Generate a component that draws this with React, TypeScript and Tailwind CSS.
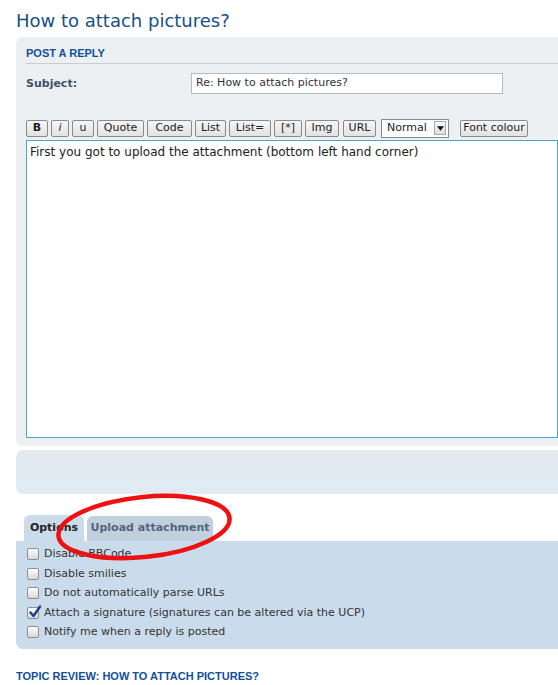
import React from 'react';

// width + left margin for each toolbar button, measured off the original
const TOOLBAR = [
    { label: 'B', cls: 'w-[22px] font-bold' },
    { label: 'i', cls: 'w-[18px] ml-[3px] italic' },
    { label: 'u', cls: 'w-[22px] ml-[3px]' },
    { label: 'Quote', cls: 'w-[47px] ml-[3px]' },
    { label: 'Code', cls: 'w-[45px] ml-[3px]' },
    { label: 'List', cls: 'w-[31px] ml-[3px]' },
    { label: 'List=', cls: 'w-[42px] ml-[3px]' },
    { label: '[*]', cls: 'w-[28px] ml-[3px]' },
    { label: 'Img', cls: 'w-[34px] ml-[3px]' },
    { label: 'URL', cls: 'w-[33px] ml-[4px]' },
];

const OPTIONS = [
    { label: 'Disable BBCode', checked: false },
    { label: 'Disable smilies', checked: false },
    { label: 'Do not automatically parse URLs', checked: false },
    { label: 'Attach a signature (signatures can be altered via the UCP)', checked: true },
    { label: 'Notify me when a reply is posted', checked: false },
];

function ToolButton({ label, cls }: { label: string; cls: string }) {
    return (
        <span className={`h-[17px] flex items-center justify-center border border-[#8a8a8a] bg-gradient-to-b from-[#f6f6f6] to-[#e2e2e2] text-[11px] text-[#222] rounded-[2px] ${cls}`}>
            {label}
        </span>
    );
}

function Checkbox({ checked }: { checked: boolean }) {
    return (
        <span className="relative w-[12px] h-[12px] shrink-0 rounded-[2px] border border-[#8e8e8e] bg-gradient-to-b from-[#ffffff] to-[#d8d8d8]">
            {checked && (
                <svg viewBox="0 0 14 14" className="absolute left-[0px] top-[-3px] w-[14px] h-[14px]">
                    <path d="M2.5 7.5 L5.5 11 L12 1.5" fill="none" stroke="#1b3f8f" strokeWidth="2.4" strokeLinecap="round" strokeLinejoin="round" />
                </svg>
            )}
        </span>
    );
}

export default function App() {
    return (
        <div className="relative w-[558px] h-[685px] overflow-hidden bg-white text-[#333]" style={{ fontFamily: '"DejaVu Sans", Verdana, sans-serif' }}>
            <h2 className="pl-[16px] pt-[8px] h-[37px] text-[18px] leading-[25px] text-[#174f86]">How to attach pictures?</h2>

            {/* post form panel */}
            <div className="ml-[16px] mr-[-20px] rounded-[7px] bg-[#ecf0f3] pl-[10px] pr-[20px] pt-[10px] pb-[8px]">
                <h3 className="text-[11px] font-bold leading-[12px] text-[#115098] pb-[4px] border-b border-[#cccccc]" style={{ fontFamily: '"Liberation Sans", Arial, sans-serif' }}>
                    POST A REPLY
                </h3>
                <div className="flex items-start mt-[9px] h-[21px]">
                    <span className="w-[165px] pt-[3px] text-[11px] font-bold text-[#425067]">Subject:</span>
                    <span className="w-[312px] h-[21px] flex items-center px-[4px] border border-[#b4bac0] bg-white text-[11px] text-[#333]">
                        Re: How to attach pictures?
                    </span>
                </div>
                <div className="flex items-center mt-[25px] h-[18px]">
                    {TOOLBAR.map((t) => (
                        <ToolButton key={t.label} label={t.label} cls={t.cls} />
                    ))}
                    <span className="ml-[5px] h-[19px] w-[68px] flex items-center justify-between pl-[5px] pr-[2px] border border-[#8a8a8a] bg-white text-[11px] text-[#222]">
                        Normal
                        <span className="w-[12px] h-[14px] flex items-center justify-center border border-[#aaa] bg-gradient-to-b from-[#fafafa] to-[#dcdcdc]">
                            <svg viewBox="0 0 8 5" className="w-[7px] h-[5px]">
                                <path d="M0 0 H8 L4 5 Z" fill="#111" />
                            </svg>
                        </span>
                    </span>
                    <ToolButton label="Font colour" cls="w-[68px] ml-[11px]" />
                </div>
                <div className="mt-[3px] h-[298px] border border-[#46a8c8] bg-white px-[3px] pt-[4px] text-[12px] leading-[15px] text-[#222]">
                    First you got to upload the attachment (bottom left hand corner)
                </div>
            </div>

            {/* empty panel */}
            <div className="ml-[16px] mr-[-20px] mt-[4px] h-[44px] rounded-[7px] bg-gradient-to-b from-[#e2e9ef] to-[#e0ebf4]" />

            {/* tabs */}
            <div className="flex items-end ml-[24px] mt-[21px] h-[26px] gap-[3px]">
                <span className="h-[26px] w-[60px] flex items-center justify-center rounded-t-[6px] bg-[#cadceb] text-[11px] font-bold text-[#222]">
                    Options
                </span>
                <span className="h-[25px] w-[126px] flex items-center justify-center rounded-t-[6px] bg-[#c2cfdc] text-[11px] font-bold text-[#536482]">
                    Upload attachment
                </span>
            </div>
            <div className="ml-[16px] mr-[-20px] h-[108px] rounded-b-[7px] rounded-tr-[7px] bg-[#cadceb] pl-[11px] pt-[6px] flex flex-col gap-[5px]">
                {OPTIONS.map((o) => (
                    <label key={o.label} className="flex items-center gap-[5px] h-[14.5px] text-[11px] text-[#333]">
                        <Checkbox checked={o.checked} />
                        {o.label}
                    </label>
                ))}
            </div>

            <h3 className="ml-[16px] mt-[21px] pb-[3px] border-b border-[#cccccc] text-[11px] font-bold leading-[12px] text-[#115098]" style={{ fontFamily: '"Liberation Sans", Arial, sans-serif' }}>
                TOPIC REVIEW: HOW TO ATTACH PICTURES?
            </h3>

            {/* red annotation ellipse */}
            <svg className="absolute left-[50px] top-[489px] w-[190px] h-[76px] pointer-events-none" viewBox="0 0 190 76">
                <ellipse cx="94" cy="38" rx="86" ry="30" fill="none" stroke="#ee1111" strokeWidth="4.5" transform="rotate(-6 94 38)" />
            </svg>
        </div>
    );
}
